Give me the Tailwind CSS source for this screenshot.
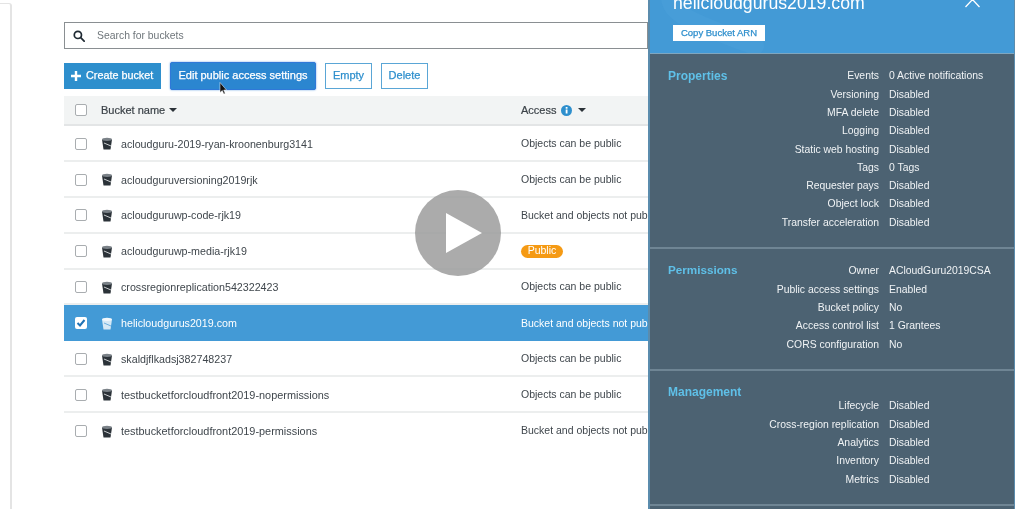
<!DOCTYPE html>
<html><head><meta charset="utf-8"><script src="https://cdn.jsdelivr.net/npm/@tailwindcss/browser@4"></script></head>
<body class="bg-white overflow-hidden">
<div class="relative w-[1033px] h-[509px] overflow-hidden bg-white font-['Liberation_Sans',sans-serif] text-[#3f464c] text-[10.500px] blur-[0.45px]">
  <div class="absolute left-0 top-[3px] bottom-0 w-[12px] border-r-2 border-t border-[#e4e4e4] rounded-tr-[3px]"></div>
  <div class="pl-[64px] pt-[22px]">
    <div class="w-[584px] h-[27px] border border-[#8a8f92] flex items-center bg-white">
      <svg class="ml-[8px] w-[12px] h-[12px]" viewBox="0 0 14 14" fill="none" stroke="#1f2a33" stroke-width="2"><circle cx="5.700" cy="5.700" r="4.200"/><path d="M9 9l4 4" stroke-linecap="round"/></svg>
      <span class="ml-[12px] text-[#6f767b] text-[10.400px] pt-[1px]">Search for buckets</span>
    </div>
    <div class="flex items-center mt-[13px] h-[27px] text-[11px] [-webkit-text-stroke:0.25px]">
      <div class="w-[97px] h-[26px] bg-[#2e8fcd] text-white flex items-center pl-[7px] gap-[5px]">
        <svg class="w-[10px] h-[10px]" viewBox="0 0 10 10" fill="#fff"><path d="M3.800 0h2.400v3.800H10v2.400H6.200V10H3.800V6.200H0V3.800h3.800z"/></svg>
        <span class="text-[10.800px]">Create bucket</span>
      </div>
      <div class="ml-[9px] w-[146px] h-[28px] rounded-[2px] bg-[#2b86d0] border border-[#2f78d8] text-white flex items-center justify-center shadow-[0_0_2px_#5b9be0]">Edit public access settings</div>
      <div class="ml-[9px] w-[47px] h-[26px] border border-[#5aa6d6] text-[#2e8fcd] flex items-center justify-center">Empty</div>
      <div class="ml-[9px] w-[47px] h-[26px] border border-[#5aa6d6] text-[#2e8fcd] flex items-center justify-center">Delete</div>
    </div>
    <div class="mt-[7px] w-[584px] h-[30px] bg-[#f2f4f4] border-b-2 border-[#e3e5e6] flex items-center text-[#3c4349] text-[11px] [-webkit-text-stroke:0.2px]">
      <span class="ml-[11px] w-[12px] h-[12px] border border-[#a9adb0] rounded-[2px] bg-white shrink-0"></span>
      <span class="ml-[14px] w-[62px] shrink-0 whitespace-nowrap">Bucket name</span>
      <span class="ml-[6px] w-0 h-0 border-x-[4px] border-x-transparent border-t-[4px] border-t-[#2b3238] shrink-0"></span>
      <span class="ml-[344px] shrink-0">Access</span>
      <svg class="ml-[5px] w-[11px] h-[11px] shrink-0" viewBox="0 0 11 11"><circle cx="5.500" cy="5.500" r="5.500" fill="#2e8fcd"/><rect x="4.700" y="4.500" width="1.800" height="4" fill="#fff"/><rect x="4.700" y="2" width="1.800" height="1.700" fill="#fff"/></svg>
      <span class="ml-[6px] w-0 h-0 border-x-[4px] border-x-transparent border-t-[4px] border-t-[#2b3238] shrink-0"></span>
    </div>
    <div class="w-[584px] whitespace-nowrap">
      <div class="h-[35.900px] pt-[1.500px] border-b-2 border-[#eceeee] flex items-center">
        <span class="ml-[11px] w-[12px] h-[12px] border border-[#a9adb0] rounded-[2px] bg-white shrink-0"></span>
        <svg class="ml-[14px] w-[12px] h-[13px] shrink-0" viewBox="0 0 12 13"><path d="M1 2.500h10L9.500 12.500h-7z" fill="#2b3238"/><ellipse cx="6" cy="2.300" rx="5" ry="1.600" fill="#7b8288"/><path d="M3 6l7 3" stroke="#c9ccce" stroke-width="1"/></svg>
        <span class="ml-[8px] w-[400px] shrink-0 text-[10.700px]">acloudguru-2019-ryan-kroonenburg3141</span><span>Objects can be public</span>
      </div>
      <div class="h-[35.900px] pt-[1.500px] border-b-2 border-[#eceeee] flex items-center">
        <span class="ml-[11px] w-[12px] h-[12px] border border-[#a9adb0] rounded-[2px] bg-white shrink-0"></span>
        <svg class="ml-[14px] w-[12px] h-[13px] shrink-0" viewBox="0 0 12 13"><path d="M1 2.500h10L9.500 12.500h-7z" fill="#2b3238"/><ellipse cx="6" cy="2.300" rx="5" ry="1.600" fill="#7b8288"/><path d="M3 6l7 3" stroke="#c9ccce" stroke-width="1"/></svg>
        <span class="ml-[8px] w-[400px] shrink-0 text-[10.700px]">acloudguruversioning2019rjk</span><span>Objects can be public</span>
      </div>
      <div class="h-[35.900px] pt-[1.500px] border-b-2 border-[#eceeee] flex items-center">
        <span class="ml-[11px] w-[12px] h-[12px] border border-[#a9adb0] rounded-[2px] bg-white shrink-0"></span>
        <svg class="ml-[14px] w-[12px] h-[13px] shrink-0" viewBox="0 0 12 13"><path d="M1 2.500h10L9.500 12.500h-7z" fill="#2b3238"/><ellipse cx="6" cy="2.300" rx="5" ry="1.600" fill="#7b8288"/><path d="M3 6l7 3" stroke="#c9ccce" stroke-width="1"/></svg>
        <span class="ml-[8px] w-[400px] shrink-0 text-[10.700px]">acloudguruwp-code-rjk19</span><span>Bucket and objects not public</span>
      </div>
      <div class="h-[35.900px] pt-[1.500px] border-b-2 border-[#eceeee] flex items-center">
        <span class="ml-[11px] w-[12px] h-[12px] border border-[#a9adb0] rounded-[2px] bg-white shrink-0"></span>
        <svg class="ml-[14px] w-[12px] h-[13px] shrink-0" viewBox="0 0 12 13"><path d="M1 2.500h10L9.500 12.500h-7z" fill="#2b3238"/><ellipse cx="6" cy="2.300" rx="5" ry="1.600" fill="#7b8288"/><path d="M3 6l7 3" stroke="#c9ccce" stroke-width="1"/></svg>
        <span class="ml-[8px] w-[400px] shrink-0 text-[10.700px]">acloudguruwp-media-rjk19</span><span class="h-[13px] w-[42px] rounded-full bg-[#f59a14] text-white flex items-center justify-center">Public</span>
      </div>
      <div class="h-[35.900px] pt-[1.500px] border-b-2 border-[#eceeee] flex items-center">
        <span class="ml-[11px] w-[12px] h-[12px] border border-[#a9adb0] rounded-[2px] bg-white shrink-0"></span>
        <svg class="ml-[14px] w-[12px] h-[13px] shrink-0" viewBox="0 0 12 13"><path d="M1 2.500h10L9.500 12.500h-7z" fill="#2b3238"/><ellipse cx="6" cy="2.300" rx="5" ry="1.600" fill="#7b8288"/><path d="M3 6l7 3" stroke="#c9ccce" stroke-width="1"/></svg>
        <span class="ml-[8px] w-[400px] shrink-0 text-[10.700px]">crossregionreplication542322423</span><span>Objects can be public</span>
      </div>
      <div class="h-[35.900px] bg-[#439ad6] text-white flex items-center">
        <span class="ml-[11px] w-[12px] h-[12px] rounded-[2px] bg-white flex items-center justify-center shrink-0"><svg class="w-[10px] h-[10px]" viewBox="0 0 10 10" fill="none" stroke="#2073b5" stroke-width="2"><path d="M1.500 5l2.500 2.500 4.500-5.500"/></svg></span>
        <svg class="ml-[14px] w-[12px] h-[13px] shrink-0" viewBox="0 0 12 13"><path d="M1 2.500h10L9.500 12.500h-7z" fill="#d5e8f5"/><ellipse cx="6" cy="2.300" rx="5" ry="1.600" fill="#f3f8fc"/><path d="M3 6l7 3" stroke="#6eb0de" stroke-width="1"/></svg>
        <span class="ml-[8px] w-[400px] shrink-0 text-[10.700px]">helicloudgurus2019.com</span><span>Bucket and objects not public</span>
      </div>
      <div class="h-[35.900px] pt-[1.500px] border-b-2 border-[#eceeee] flex items-center">
        <span class="ml-[11px] w-[12px] h-[12px] border border-[#a9adb0] rounded-[2px] bg-white shrink-0"></span>
        <svg class="ml-[14px] w-[12px] h-[13px] shrink-0" viewBox="0 0 12 13"><path d="M1 2.500h10L9.500 12.500h-7z" fill="#2b3238"/><ellipse cx="6" cy="2.300" rx="5" ry="1.600" fill="#7b8288"/><path d="M3 6l7 3" stroke="#c9ccce" stroke-width="1"/></svg>
        <span class="ml-[8px] w-[400px] shrink-0 text-[10.700px]">skaldjflkadsj382748237</span><span>Objects can be public</span>
      </div>
      <div class="h-[35.900px] pt-[1.500px] border-b-2 border-[#eceeee] flex items-center">
        <span class="ml-[11px] w-[12px] h-[12px] border border-[#a9adb0] rounded-[2px] bg-white shrink-0"></span>
        <svg class="ml-[14px] w-[12px] h-[13px] shrink-0" viewBox="0 0 12 13"><path d="M1 2.500h10L9.500 12.500h-7z" fill="#2b3238"/><ellipse cx="6" cy="2.300" rx="5" ry="1.600" fill="#7b8288"/><path d="M3 6l7 3" stroke="#c9ccce" stroke-width="1"/></svg>
        <span class="ml-[8px] w-[400px] shrink-0 text-[10.900px]">testbucketforcloudfront2019-nopermissions</span><span>Objects can be public</span>
      </div>
      <div class="h-[35.900px] flex items-center">
        <span class="ml-[11px] w-[12px] h-[12px] border border-[#a9adb0] rounded-[2px] bg-white shrink-0"></span>
        <svg class="ml-[14px] w-[12px] h-[13px] shrink-0" viewBox="0 0 12 13"><path d="M1 2.500h10L9.500 12.500h-7z" fill="#2b3238"/><ellipse cx="6" cy="2.300" rx="5" ry="1.600" fill="#7b8288"/><path d="M3 6l7 3" stroke="#c9ccce" stroke-width="1"/></svg>
        <span class="ml-[8px] w-[400px] shrink-0 text-[10.900px]">testbucketforcloudfront2019-permissions</span><span>Bucket and objects not public</span>
      </div>
    </div>
  </div>

  <svg class="absolute left-[219px] top-[82px] w-[8px] h-[13px]" viewBox="0 0 8 13"><path d="M1 .5v10l2.300-2 1.500 3.500 1.400-.6-1.500-3.400H7.500z" fill="#111" stroke="#fff" stroke-width=".5"/></svg>

  <div class="absolute left-[415px] top-[190px] w-[86px] h-[86px] rounded-full bg-[#9c9c9c]/85 flex items-center justify-center">
    <svg class="w-[36px] h-[40px] ml-[11px]" viewBox="0 0 36 40"><path d="M0 0L36 20L0 40z" fill="#fff"/></svg>
  </div>

  <div class="absolute left-[648px] top-0 w-[367px] h-[509px] border-l-2 border-r border-[#5b8cad] bg-[#4c6272] text-[#f0f3f5] text-[10.400px]">
    <div class="h-[54px] bg-[#439ad6] border-b border-[#7fa6bf] relative overflow-hidden">
      <svg class="absolute left-0 top-0 w-[130px] h-[54px]" viewBox="0 0 130 54" fill="none" stroke="#479dd8" stroke-width="18" stroke-linecap="round"><path d="M20 -4C20 14 40 22 105 46"/></svg>
      <div class="absolute left-[23px] top-[-7px] text-[17.700px] leading-[20px] text-white whitespace-nowrap">helicloudgurus2019.com</div>
      <svg class="absolute right-[34px] top-[-3px] w-[15px] h-[11px]" viewBox="0 0 15 11" fill="none" stroke="#fff" stroke-width="1.300"><path d="M.5 10L7.500 2.500 14.500 10"/></svg>
      <div class="absolute left-[23px] top-[25px] w-[92px] h-[16px] bg-white text-[#2e8fcd] text-[9.500px] [-webkit-text-stroke:0.25px] flex items-center justify-center">Copy Bucket ARN</div>
    </div>
    <div class="h-[195px] border-b-2 border-[#6f8594] flex pt-[13px]">
      <div class="w-[111px] pl-[18px] text-[#5fc0e8] font-bold text-[12px] leading-[18px]">Properties</div>
      <div class="grid grid-cols-[118px_1fr] gap-x-[10px] auto-rows-[18.300px] items-center h-fit">
        <span class="text-right">Events</span><span>0 Active notifications</span>
        <span class="text-right">Versioning</span><span>Disabled</span>
        <span class="text-right">MFA delete</span><span>Disabled</span>
        <span class="text-right">Logging</span><span>Disabled</span>
        <span class="text-right">Static web hosting</span><span>Disabled</span>
        <span class="text-right">Tags</span><span>0 Tags</span>
        <span class="text-right">Requester pays</span><span>Disabled</span>
        <span class="text-right">Object lock</span><span>Disabled</span>
        <span class="text-right">Transfer acceleration</span><span>Disabled</span>
      </div>
    </div>
    <div class="h-[122px] border-b-2 border-[#6f8594] flex pt-[12px]">
      <div class="w-[111px] pl-[18px] text-[#5fc0e8] font-bold text-[11.700px] leading-[18px]">Permissions</div>
      <div class="grid grid-cols-[118px_1fr] gap-x-[10px] auto-rows-[18.300px] items-center pt-[1px] h-fit">
        <span class="text-right">Owner</span><span>ACloudGuru2019CSA</span>
        <span class="text-right">Public access settings</span><span>Enabled</span>
        <span class="text-right">Bucket policy</span><span>No</span>
        <span class="text-right">Access control list</span><span>1 Grantees</span>
        <span class="text-right">CORS configuration</span><span>No</span>
      </div>
    </div>
    <div class="h-[135px] border-b-2 border-[#6f8594] flex pt-[12px]">
      <div class="w-[111px] pl-[18px] text-[#5fc0e8] font-bold text-[12px] leading-[18px]">Management</div>
      <div class="grid grid-cols-[118px_1fr] gap-x-[10px] auto-rows-[18.300px] items-center pt-[14px] h-fit">
        <span class="text-right">Lifecycle</span><span>Disabled</span>
        <span class="text-right">Cross-region replication</span><span>Disabled</span>
        <span class="text-right">Analytics</span><span>Disabled</span>
        <span class="text-right">Inventory</span><span>Disabled</span>
        <span class="text-right">Metrics</span><span>Disabled</span>
      </div>
    </div>
  </div>
</div>
</body></html>
